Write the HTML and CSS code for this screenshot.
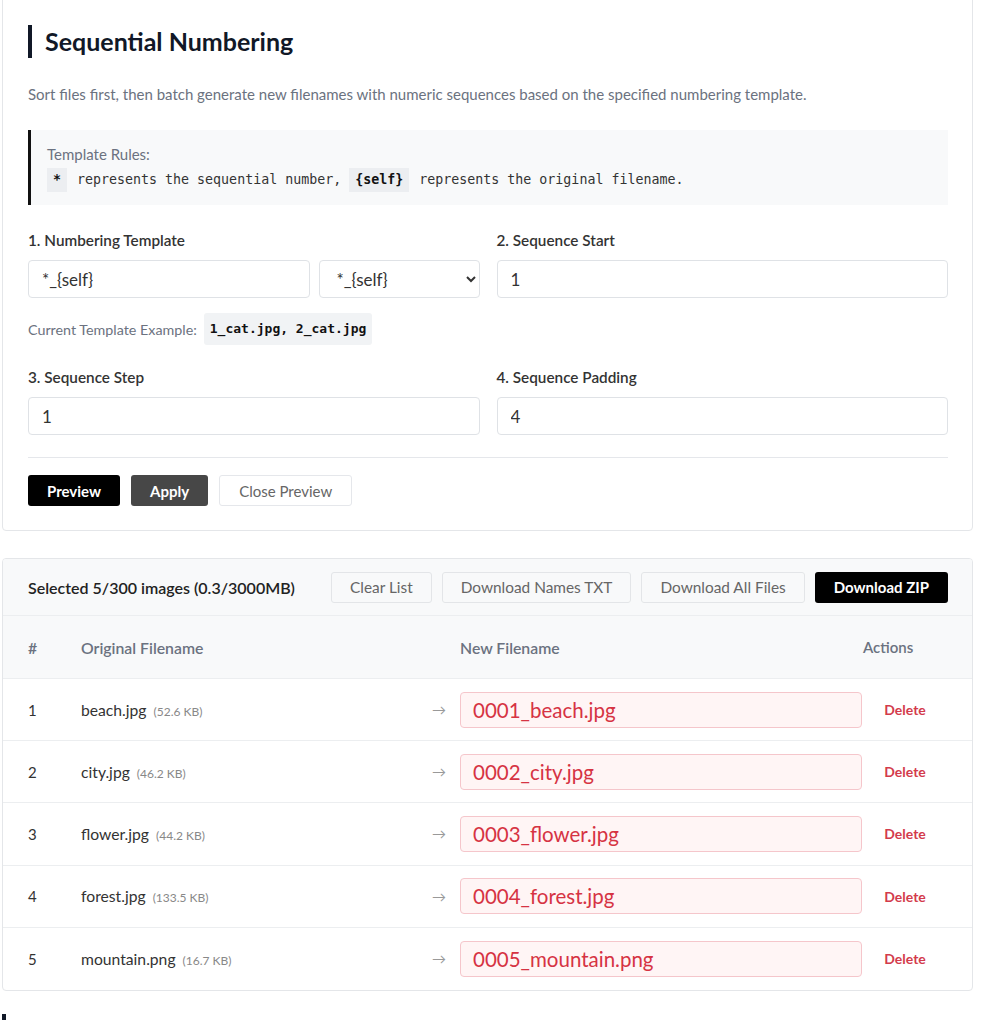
FILE: index.html
```html
<!DOCTYPE html>
<html lang="en">
<head>
  <meta charset="UTF-8">
  <meta name="viewport" content="width=device-width, initial-scale=1.0">
  <title>Sequential Numbering</title>
  <link rel="stylesheet" href="styles.css">
</head>
<body>
  <div class="page">
    <div class="panel settings">
      <h2 class="section-title">Sequential Numbering</h2>
      <p class="desc">Sort files first, then batch generate new filenames with numeric sequences based on the specified numbering template.</p>

      <div class="rules">
        <div class="rules-title">Template Rules:</div>
        <div class="rules-line"><code>*</code> represents the sequential number, <code>{self}</code> represents the original filename.</div>
      </div>

      <div class="form-grid">
        <div class="field">
          <label>1. Numbering Template</label>
          <div class="template-row">
            <input type="text" class="input" value="*_{self}">
            <select class="input select">
              <option>*_{self}</option>
              <option>{self}_*</option>
              <option>*</option>
            </select>
          </div>
          <div class="example">
            <span>Current Template Example:</span>
            <code class="example-code">1_cat.jpg, 2_cat.jpg</code>
          </div>
        </div>
        <div class="field">
          <label>2. Sequence Start</label>
          <input type="text" class="input" value="1">
        </div>
        <div class="field">
          <label>3. Sequence Step</label>
          <input type="text" class="input" value="1">
        </div>
        <div class="field">
          <label>4. Sequence Padding</label>
          <input type="text" class="input" value="4">
        </div>
      </div>

      <div class="actions">
        <button class="btn btn-dark">Preview</button>
        <button class="btn btn-gray">Apply</button>
        <button class="btn btn-light">Close Preview</button>
      </div>
    </div>

    <div class="panel files">
      <div class="files-head">
        <div class="files-count">Selected 5/300 images (0.3/3000MB)</div>
        <div class="files-btns">
          <button class="btn btn-soft">Clear List</button>
          <button class="btn btn-soft">Download Names TXT</button>
          <button class="btn btn-soft">Download All Files</button>
          <button class="btn btn-dark">Download ZIP</button>
        </div>
      </div>

      <div class="row row-head">
        <div>#</div>
        <div class="span2">Original Filename</div>
        <div>New Filename</div>
        <div>Actions</div>
      </div>

      <div class="row">
        <div>1</div>
        <div class="name">beach.jpg <span class="size">(52.6 KB)</span></div>
        <div class="arrow">→</div>
        <div><input type="text" class="new-name" value="0001_beach.jpg"></div>
        <div class="del">Delete</div>
      </div>
      <div class="row">
        <div>2</div>
        <div class="name">city.jpg <span class="size">(46.2 KB)</span></div>
        <div class="arrow">→</div>
        <div><input type="text" class="new-name" value="0002_city.jpg"></div>
        <div class="del">Delete</div>
      </div>
      <div class="row">
        <div>3</div>
        <div class="name">flower.jpg <span class="size">(44.2 KB)</span></div>
        <div class="arrow">→</div>
        <div><input type="text" class="new-name" value="0003_flower.jpg"></div>
        <div class="del">Delete</div>
      </div>
      <div class="row">
        <div>4</div>
        <div class="name">forest.jpg <span class="size">(133.5 KB)</span></div>
        <div class="arrow">→</div>
        <div><input type="text" class="new-name" value="0004_forest.jpg"></div>
        <div class="del">Delete</div>
      </div>
      <div class="row">
        <div>5</div>
        <div class="name">mountain.png <span class="size">(16.7 KB)</span></div>
        <div class="arrow">→</div>
        <div><input type="text" class="new-name" value="0005_mountain.png"></div>
        <div class="del">Delete</div>
      </div>
    </div>

    <h2 class="section-title next">&nbsp;</h2>
  </div>
</body>
</html>
```

FILE: styles.css
```css
* {
  box-sizing: border-box;
}
body {
  margin: 0;
  font-family: Lato, 'Noto Sans', sans-serif;
  background: #fff;
  color: #333;
  overflow: hidden;
}
.page {
  margin-top: -8px;
  padding: 0 9px 0 2px;
}
.panel {
  background: #fff;
  border: 1px solid #e4e6e9;
  border-radius: 4px;
}
.settings {
  padding: 32px 24px 24px 25px;
}
.section-title {
  margin: 0;
  border-left: 4px solid #111827;
  padding-left: 13px;
  font-size: 25px;
  line-height: 33px;
  font-weight: 700;
  color: #111827;
}
.desc {
  margin: 26px 0 0;
  font-size: 15px;
  line-height: 20px;
  color: #6b7280;
}
.rules {
  margin-top: 26px;
  background: #f8f9fa;
  border-left: 3px solid #111;
  padding: 14px 16px 13px 16px;
}
.rules-title {
  font-size: 15px;
  line-height: 20px;
  color: #6b7280;
}
.rules-line {
  margin-top: 4px;
  font-family: 'DejaVu Sans Mono', monospace;
  font-size: 13.3px;
  line-height: 24px;
  color: #333;
}
.rules-line code {
  display: inline-block;
  background: #eceef1;
  padding: 3px 6px;
  line-height: 18px;
  font-weight: 700;
  font-family: inherit;
  color: #111;
  margin: 0 2px 0 0;
}
.form-grid {
  display: grid;
  grid-template-columns: 1fr 1fr;
  column-gap: 17px;
  margin-top: 25px;
}
.field label {
  display: block;
  font-size: 15.3px;
  line-height: 20px;
  font-weight: 600;
  color: #333;
  margin-bottom: 10px;
}
.field:nth-child(n+3) {
  margin-top: 22px;
}
.input {
  display: block;
  width: 100%;
  height: 38px;
  border: 1px solid #dfe2e6;
  border-radius: 4px;
  padding: 0 13px;
  font-family: Lato, 'Noto Sans', sans-serif;
  font-size: 17px;
  color: #333;
  background: #fff;
}
.template-row {
  display: flex;
  gap: 9px;
}
.template-row .input {
  flex: 1;
}
.template-row .select {
  flex: 0 0 161px;
  padding-left: 13px;
}
.example {
  display: flex;
  align-items: center;
  gap: 7px;
  margin-top: 15px;
  font-size: 14.3px;
  color: #6b7280;
}
.example-code {
  background: #f1f3f5;
  padding: 0 6px;
  line-height: 32px;
  border-radius: 3px;
  font-family: 'DejaVu Sans Mono', monospace;
  font-size: 13px;
  font-weight: 700;
  color: #111;
}
.actions {
  display: flex;
  gap: 11px;
  margin-top: 22px;
  padding-top: 17px;
  border-top: 1px solid #e5e7eb;
}
.btn {
  height: 31px;
  padding: 0 18px;
  border-radius: 3px;
  border: 1px solid transparent;
  font-family: Lato, 'Noto Sans', sans-serif;
  font-size: 15px;
  cursor: pointer;
}
.btn-dark {
  background: #000;
  color: #fff;
  font-weight: 700;
}
.btn-gray {
  background: #474747;
  color: #fff;
  font-weight: 700;
}
.btn-light {
  background: #fff;
  border-color: #e5e7eb;
  color: #666;
  padding: 0 19px;
}
.btn-soft {
  background: #f8f9fa;
  border-color: #e3e5e8;
  color: #666;
  font-size: 15.4px;
}
.files {
  margin-top: 27px;
  overflow: hidden;
}
.files-head {
  display: flex;
  align-items: center;
  justify-content: space-between;
  height: 57px;
  padding: 0 24px 0 25px;
  background: #f8f9fa;
  border-bottom: 1px solid #eceef0;
}
.files-count {
  font-size: 16px;
  font-weight: 600;
  color: #222;
}
.files-btns {
  display: flex;
  gap: 10px;
}
.row {
  display: grid;
  grid-template-columns: 53px 1fr 36px 402px 86px;
  align-items: center;
  height: 62.2px;
  padding: 0 24px 0 25px;
  border-bottom: 1px solid #eceef0;
  font-size: 15px;
}
.row:last-child {
  border-bottom: none;
}
.row-head {
  height: 63px;
  background: #f8f9fa;
  color: #6b7280;
  font-size: 15.8px;
  font-weight: 600;
}
.row-head .span2 {
  grid-column: span 2;
}
.row-head div:last-child {
  padding-left: 1px;
  font-size: 15px;
}
.name {
  font-size: 15.7px;
  color: #333;
}
.size {
  font-size: 12px;
  color: #888;
  margin-left: 3px;
}
.arrow {
  color: #999;
  font-size: 14px;
  padding-left: 8px;
}
.new-name {
  display: block;
  width: 100%;
  height: 36px;
  border: 1px solid #f5c6cb;
  border-radius: 4px;
  background: #fff5f5;
  padding: 0 12px;
  font-family: Lato, 'Noto Sans', sans-serif;
  font-size: 20.5px;
  color: #d63343;
}
.del {
  text-align: center;
  color: #d33b4c;
  font-weight: 700;
  font-size: 14px;
}
.next {
  margin-top: 23px;
  padding-left: 0;
}
```
